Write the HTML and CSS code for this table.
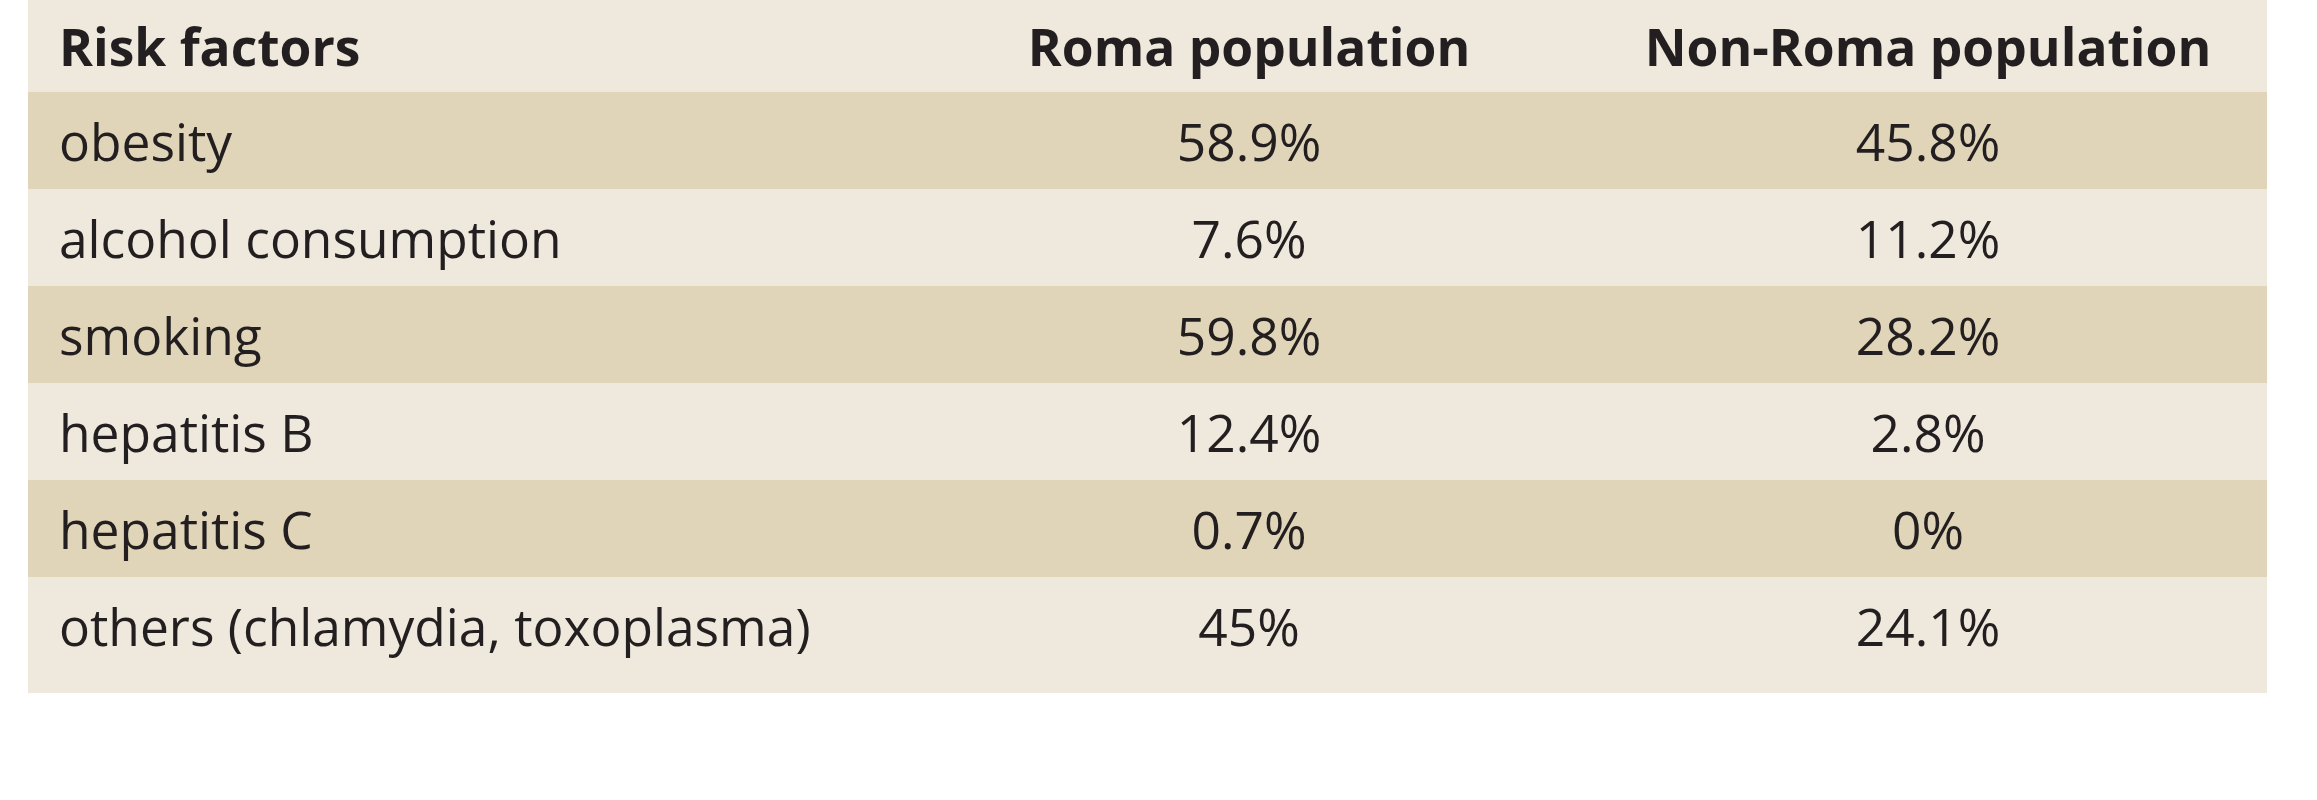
FILE: index.html
```html
<!DOCTYPE html>
<html lang="en">
<head>
<meta charset="utf-8">
<title>Risk factors</title>
<link rel="stylesheet" href="styles.css">
</head>
<body>
<div class="risk-table">
  <div class="row head">
    <div class="cell label">Risk factors</div>
    <div class="cell val">Roma population</div>
    <div class="cell val">Non-Roma population</div>
  </div>
  <div class="row dark">
    <div class="cell label">obesity</div>
    <div class="cell val">58.9%</div>
    <div class="cell val">45.8%</div>
  </div>
  <div class="row">
    <div class="cell label">alcohol consumption</div>
    <div class="cell val">7.6%</div>
    <div class="cell val">11.2%</div>
  </div>
  <div class="row dark">
    <div class="cell label">smoking</div>
    <div class="cell val">59.8%</div>
    <div class="cell val">28.2%</div>
  </div>
  <div class="row">
    <div class="cell label">hepatitis B</div>
    <div class="cell val">12.4%</div>
    <div class="cell val">2.8%</div>
  </div>
  <div class="row dark">
    <div class="cell label">hepatitis C</div>
    <div class="cell val">0.7%</div>
    <div class="cell val">0%</div>
  </div>
  <div class="row last">
    <div class="cell label">others (chlamydia, toxoplasma)</div>
    <div class="cell val">45%</div>
    <div class="cell val">24.1%</div>
  </div>
</div>
</body>
</html>
```
FILE: styles.css
```css
html, body {
  margin: 0;
  padding: 0;
  background: #ffffff;
}

body {
  font-family: "Open Sans", "Liberation Sans", sans-serif;
  color: #231f20;
}

.risk-table {
  margin-left: 28px;
  width: 2239px;
  background: #efe9dd;
}

.row {
  display: grid;
  grid-template-columns: 881px 680px 678px;
  height: 97px;
  font-size: 51.5px;
}

.row.head {
  height: 92px;
  font-weight: 700;
}

.row.dark {
  background: #e0d5b8;
}

.row.last {
  height: 97px;
  padding-bottom: 19px;
}

.cell {
  display: flex;
  align-items: center;
  white-space: nowrap;
}

.cell.label {
  padding-left: 31px;
}

.cell.val {
  justify-content: center;
}
```
